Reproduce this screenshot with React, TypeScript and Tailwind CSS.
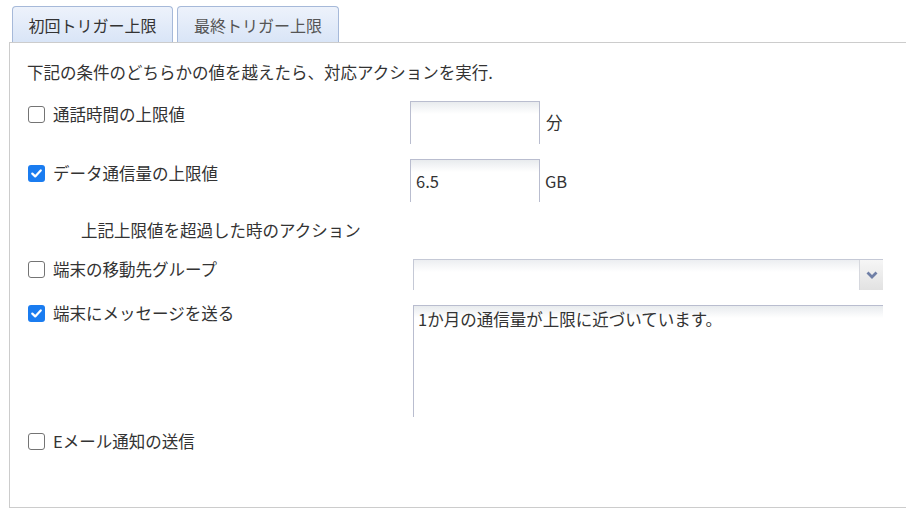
import React from "react";

const font = { fontFamily: '"Noto Sans CJK JP", "Noto Sans", sans-serif' };

const Check = ({ checked, label }: { checked?: boolean; label: string }) => (
  <label className="flex items-center gap-[8px] text-[16.5px] leading-[24px] text-[#333]">
    {checked ? (
      <span className="shrink-0 w-[17px] h-[17px] ml-[1px] rounded-[3px] bg-[#1a7cf0] flex items-center justify-center">
        <svg width="11" height="9" viewBox="0 0 11 9">
          <path d="M1.3 4.6 L4.2 7.4 L9.7 1.4" fill="none" stroke="#fff" strokeWidth="2.2" strokeLinecap="round" strokeLinejoin="round" />
        </svg>
      </span>
    ) : (
      <span className="shrink-0 w-[17px] h-[17px] ml-[1px] rounded-[3px] border-[1.5px] border-[#747474] bg-white" />
    )}
    <span>{label}</span>
  </label>
);

const App = () => {
  return (
    <div className="w-[906px] h-[517px] overflow-hidden bg-white pl-[9px] pt-[6px]" style={font}>
      {/* tabs */}
      <div className="flex items-end gap-[4px] pl-[3px]">
        <div className="w-[161px] h-[36px] flex items-center justify-center rounded-t-[4px] border border-b-0 border-[#a6b9d9] bg-[linear-gradient(to_bottom,#edf2fb,#d9e5f7)] text-[16px] text-[#333]">
          初回トリガー上限
        </div>
        <div className="w-[162px] h-[36px] flex items-center justify-center rounded-t-[4px] border border-b-0 border-[#a6b9d9] bg-[linear-gradient(to_bottom,#edf2fb,#d9e5f7)] text-[16px] text-[#555]">
          最終トリガー上限
        </div>
      </div>

      {/* panel */}
      <div className="w-[910px] h-[466px] border border-r-0 border-[#cccccc] pl-[17px] pt-[17px]">
        <p className="text-[16.5px] leading-[24px] text-[#333]">下記の条件のどちらかの値を越えたら、対応アクションを実行.</p>

        <div className="flex items-start mt-[17px]">
          <div className="w-[383px] pt-[1px]">
            <Check label="通話時間の上限値" />
          </div>
          <input className="w-[130px] h-[43px] border border-b-0 border-[#b9bdcf] bg-[linear-gradient(to_bottom,#e8ebee,#ffffff_12px)] px-[5px] text-[16.5px] text-[#333] outline-none" />
          <span className="ml-[6px] mt-[9px] text-[16.5px] leading-[24px] text-[#333]">分</span>
        </div>

        <div className="flex items-start mt-[15px]">
          <div className="w-[383px] pt-[2px]">
            <Check checked label="データ通信量の上限値" />
          </div>
          <input
            defaultValue="6.5"
            className="w-[130px] h-[43px] border border-b-0 border-[#b9bdcf] bg-[linear-gradient(to_bottom,#e8ebee,#ffffff_12px)] px-[5px] text-[16.5px] text-[#333] outline-none"
          />
          <span className="ml-[5px] mt-[10px] text-[16.5px] leading-[24px] text-[#333]">GB</span>
        </div>

        <p className="mt-[16px] pl-[54px] text-[16.5px] leading-[24px] text-[#333]">上記上限値を超過した時のアクション</p>

        <div className="flex items-start mt-[15px]">
          <div className="w-[386px]">
            <Check label="端末の移動先グループ" />
          </div>
          <div className="mt-[2px] w-[470px] h-[31px] flex border-t border-l border-[#c5c9d6] bg-[linear-gradient(to_bottom,#eceef1,#ffffff_12px)]">
            <div className="flex-1" />
            <div className="w-[24px] h-full flex items-center justify-center border-l border-[#d6d8de] bg-[linear-gradient(to_bottom,#f6f6f6,#e2e2e2)]">
              <svg width="12" height="8" viewBox="0 0 12 8">
                <path d="M1.5 1.5 L6 6 L10.5 1.5" fill="none" stroke="#6f7fa6" strokeWidth="2.8" />
              </svg>
            </div>
          </div>
        </div>

        <div className="flex items-start mt-[11px]">
          <div className="w-[386px]">
            <Check checked label="端末にメッセージを送る" />
          </div>
          <textarea
            defaultValue="1か月の通信量が上限に近づいています。"
            className="mt-[4px] w-[470px] h-[112px] resize-none border-t border-l border-[#b9bdcf] bg-[linear-gradient(to_bottom,#e8ebee,#ffffff_12px)] px-[4px] pt-[1px] text-[16.5px] leading-[24px] text-[#333] outline-none"
          />
        </div>

        <div className="mt-[12px]">
          <Check label="Eメール通知の送信" />
        </div>
      </div>
    </div>
  );
};

export default App;
